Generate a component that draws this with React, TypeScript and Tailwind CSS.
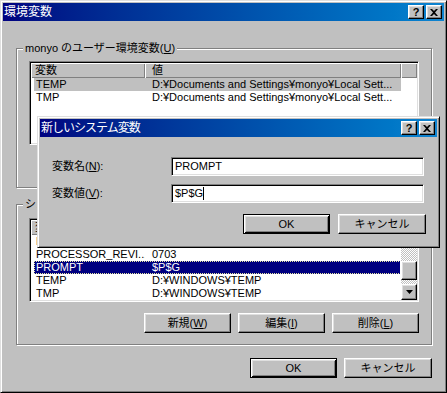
import React from "react";
import type { FC, ReactNode } from "react";

const frame =
  "border border-t-[#dfdfdf] border-l-[#dfdfdf] border-r-black border-b-black shadow-[inset_1px_1px_#fff,inset_-1px_-1px_#808080] bg-[#c0c0c0] p-[2px]";
const raised =
  "border border-t-white border-l-white border-r-black border-b-black shadow-[inset_-1px_-1px_#808080,inset_1px_1px_#dfdfdf] bg-[#c0c0c0]";
const defRaised =
  "border border-black shadow-[inset_1px_1px_#fff,inset_-1px_-1px_#000,inset_2px_2px_#dfdfdf,inset_-2px_-2px_#808080] bg-[#c0c0c0]";
const sunken =
  "border border-t-[#808080] border-l-[#808080] border-r-white border-b-white shadow-[inset_1px_1px_#000,inset_-1px_-1px_#dfdfdf]";
const checker =
  "bg-[repeating-conic-gradient(#fff_0%_25%,#c0c0c0_0%_50%)] bg-[length:2px_2px]";

type Row = { name: string; value: string; state?: "gray" | "focus" };

const userRows: Row[] = [
  { name: "TEMP", value: "D:¥Documents and Settings¥monyo¥Local Sett...", state: "gray" },
  { name: "TMP", value: "D:¥Documents and Settings¥monyo¥Local Sett..." },
];

const sysRows: Row[] = [
  { name: "PROCESSOR_LEVEL", value: "6" },
  { name: "PROCESSOR_REVI...", value: "0703" },
  { name: "PROMPT", value: "$P$G", state: "focus" },
  { name: "TEMP", value: "D:¥WINDOWS¥TEMP" },
  { name: "TMP", value: "D:¥WINDOWS¥TEMP" },
  { name: "windir", value: "D:¥WINDOWS" },
];

const Btn: FC<{ children: ReactNode; def?: boolean; w?: string }> = ({ children, def, w = "w-[87px]" }) => (
  <button
    type="button"
    className={`${w} h-[20px] flex items-center justify-center text-[11px] leading-[13px] text-black ${def ? defRaised : raised}`}
  >
    {children}
  </button>
);

const TitleBar: FC<{ title: string; tight?: boolean }> = ({ title, tight }) => (
  <div className="h-[18px] flex items-center bg-linear-to-r from-[#000080] to-[#1084d0] shrink-0">
    <span className={`pl-[1px] text-[12px] leading-[14px] text-white ${tight ? "tracking-[-1px]" : ""}`}>{title}</span>
    <div className="ml-auto flex gap-[2px] pr-[2px]">
      <div className={`w-[16px] h-[14px] flex items-center justify-center ${raised}`}>
        <span className="text-[11px] leading-[11px] font-bold text-black">?</span>
      </div>
      <div className={`w-[16px] h-[14px] flex items-center justify-center ${raised}`}>
        <svg width="8" height="7" viewBox="0 0 8 7">
          <path d="M0 0h2l2 2 2-2h2L5 3.5 8 7H6L4 5 2 7H0l3-3.5z" fill="#000" />
        </svg>
      </div>
    </div>
  </div>
);

const ListView: FC<{ rows: Row[]; scroll?: boolean }> = ({ rows, scroll }) => (
  <div className={`ml-[12px] w-[390px] h-[84px] bg-white flex overflow-hidden ${sunken}`}>
    <div className="flex-1 flex flex-col overflow-hidden m-[1px]">
      <div className="h-[15px] flex shrink-0 bg-[#c0c0c0]">
        <div className="w-[114px] pl-[4px] leading-[15px] shadow-[inset_1px_1px_#fff,inset_-1px_-1px_#808080]">変数</div>
        <div className="w-[256px] pl-[7px] leading-[15px] shadow-[inset_1px_1px_#fff,inset_-1px_-1px_#808080]">値</div>
        <div className="flex-1 shadow-[inset_1px_1px_#fff,inset_-1px_-1px_#808080]" />
      </div>
      <div className="pl-[3px] flex flex-col">
        {rows.map((r) => (
          <div
            key={r.name}
            className={`w-[367px] h-[13px] shrink-0 flex leading-[13px] whitespace-nowrap ${
              r.state === "gray"
                ? "bg-[#c0c0c0]"
                : r.state === "focus"
                ? "bg-[#000080] text-white outline outline-1 outline-dotted outline-[#e8e8a0] -outline-offset-1"
                : ""
            }`}
          >
            <span className="w-[111px] pl-[2px] overflow-hidden">{r.name}</span>
            <span className="flex-1 pl-[7px] overflow-hidden">{r.value}</span>
          </div>
        ))}
      </div>
    </div>
    {scroll && (
      <div className="w-[16px] flex flex-col my-[1px] mr-[1px] shrink-0">
        <div className={`h-[16px] flex items-center justify-center ${raised}`}>
          <svg width="7" height="4" viewBox="0 0 7 4">
            <path d="M3.5 0L7 4H0z" fill="#000" />
          </svg>
        </div>
        <div className={`h-[25px] ${checker}`} />
        <div className={`h-[19px] ${raised}`} />
        <div className={`flex-1 ${checker}`} />
        <div className={`h-[16px] flex items-center justify-center ${raised}`}>
          <svg width="7" height="4" viewBox="0 0 7 4">
            <path d="M0 0h7L3.5 4z" fill="#000" />
          </svg>
        </div>
      </div>
    )}
  </div>
);

const GroupBox: FC<{
  label: ReactNode;
  className: string;
  listGap: string;
  rows: Row[];
  scroll?: boolean;
  buttons: ReactNode[];
}> = ({ label, className, listGap, rows, scroll, buttons }) => (
  <div
    className={`ml-[13px] w-[416px] border border-[#808080] shadow-[inset_1px_1px_#fff,1px_1px_#fff] pb-[11px] ${className}`}
  >
    <div className="-mt-[8px] ml-[6px] px-[2px] w-fit bg-[#c0c0c0] leading-[14px]">{label}</div>
    <div className={listGap}>
      <ListView rows={rows} scroll={scroll} />
    </div>
    <div className="mt-[11px] flex justify-end gap-[7px] pr-[12px]">
      {buttons.map((b, i) => (
        <Btn key={i}>{b}</Btn>
      ))}
    </div>
  </div>
);

export default function App() {
  return (
    <div className="w-[447px] h-[393px] [font-family:'Liberation_Sans','Noto_Sans_CJK_JP',sans-serif] text-[11px] text-black">
      <div className={`relative w-[447px] h-[393px] flex flex-col ${frame}`}>
        <TitleBar title="環境変数" />

        <GroupBox
          className="mt-[27px]"
          listGap="mt-[6px]"
          label={
            <>
              monyo のユーザー環境変数(<u>U</u>)
            </>
          }
          rows={userRows}
          buttons={[
            <>新規(<u>N</u>)</>,
            <>編集(<u>E</u>)</>,
            <>削除(<u>D</u>)</>,
          ]}
        />

        <GroupBox
          className="mt-[16px]"
          listGap="mt-[7px]"
          label={
            <>
              システム環境変数(<u>S</u>)
            </>
          }
          rows={sysRows}
          scroll
          buttons={[
            <>新規(<u>W</u>)</>,
            <>編集(<u>I</u>)</>,
            <>削除(<u>L</u>)</>,
          ]}
        />

        <div className="mt-[13px] flex justify-end gap-[7px] pr-[12px]">
          <Btn def>OK</Btn>
          <Btn w="w-[88px]">キャンセル</Btn>
        </div>

        {/* child dialog over the main window */}
        <div className={`absolute left-[36px] top-[115px] w-[403px] h-[132px] flex flex-col ${frame}`}>
          <TitleBar title="新しいシステム変数" tight />
          <div className="mt-[20px] flex items-center">
            <span className="w-[131px] pl-[12px]">
              変数名(<u>N</u>):
            </span>
            <div className={`w-[253px] h-[19px] bg-white flex items-center pl-[3px] ${sunken}`}>PROMPT</div>
          </div>
          <div className="mt-[8px] flex items-center">
            <span className="w-[131px] pl-[12px]">
              変数値(<u>V</u>):
            </span>
            <div className={`w-[253px] h-[19px] bg-white flex items-center pl-[3px] ${sunken}`}>
              $P$G<span className="w-[1px] h-[13px] bg-black" />
            </div>
          </div>
          <div className="mt-[11px] flex justify-end gap-[8px] pr-[11px]">
            <Btn def>OK</Btn>
            <Btn w="w-[88px]">キャンセル</Btn>
          </div>
        </div>
      </div>
    </div>
  );
}
